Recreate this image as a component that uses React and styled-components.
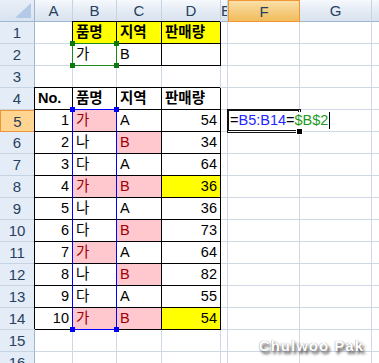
import React from 'react'
import styled, { createGlobalStyle, css } from 'styled-components'

const GlobalStyle = createGlobalStyle`
  html, body {
    margin: 0;
    padding: 0;
    background: #fff;
    overflow: hidden;
  }
`

const COLUMNS = ['A', 'B', 'C', 'D', 'E', 'F', 'G', 'H']
const WIDTHS = [35, 38, 44, 45, 59, 7, 72, 72, 40]
const YELLOW = '#ffff00'
const PINK = '#ffc7ce'
const DARK_RED = '#9c0006'

const records = [
  [1, '가', 'A', 54],
  [2, '나', 'B', 34],
  [3, '다', 'A', 64],
  [4, '가', 'B', 36],
  [5, '나', 'A', 36],
  [6, '다', 'B', 73],
  [7, '가', 'A', 64],
  [8, '나', 'B', 82],
  [9, '다', 'A', 55],
  [10, '가', 'B', 54],
]

// what each cell of a row holds, by column letter
const rowCells = (row) => {
  if (row === 1) {
    return {
      B: { text: '품명', bold: true, fill: YELLOW, boxed: true },
      C: { text: '지역', bold: true, fill: YELLOW, boxed: true },
      D: { text: '판매량', bold: true, fill: YELLOW, boxed: true },
    }
  }
  if (row === 2) {
    return {
      B: { text: '가', boxed: true },
      C: { text: 'B', boxed: true },
      D: { boxed: true },
    }
  }
  if (row === 4) {
    return {
      A: { text: 'No.', bold: true, boxed: true },
      B: { text: '품명', bold: true, boxed: true },
      C: { text: '지역', bold: true, boxed: true },
      D: { text: '판매량', bold: true, boxed: true },
    }
  }
  if (row >= 5 && row <= 14) {
    const [no, name, area, qty] = records[row - 5]
    const hitName = name === '가'
    const hitArea = area === 'B'
    const cells = {
      A: { text: no, right: true, boxed: true },
      B: { text: name, boxed: true, fill: hitName ? PINK : null, color: hitName ? DARK_RED : null },
      C: { text: area, boxed: true, fill: hitArea ? PINK : null, color: hitArea ? DARK_RED : null },
      D: { text: qty, right: true, boxed: true, fill: hitName && hitArea ? YELLOW : null },
    }
    if (row === 5) cells.F = { editing: true }
    return cells
  }
  return {}
}

const Frame = styled.div`
  width: 379px;
  height: 363px;
  overflow: hidden;
  position: relative;
  font-family: 'Liberation Sans', 'Noto Sans CJK KR', sans-serif;
`

const Sheet = styled.div`
  display: grid;
  grid-template-columns: ${WIDTHS.map((w) => `${w}px`).join(' ')};
  grid-template-rows: repeat(17, 22px);
`

const placed = css`
  grid-row: ${(p) => p.$r};
  grid-column: ${(p) => p.$c};
`

const Corner = styled.div`
  grid-row: 1;
  grid-column: 1;
  box-sizing: border-box;
  position: relative;
  background: linear-gradient(#e9eff8, #d9e3f1);
  border-right: 1px solid #9eb6ce;
  border-bottom: 1px solid #9eb6ce;

  &::after {
    content: '';
    position: absolute;
    right: 3px;
    bottom: 3px;
    width: 16px;
    height: 15px;
    background: #b3c9e8;
    clip-path: polygon(100% 0, 100% 100%, 0 100%);
  }
`

const ColHead = styled.div`
  ${placed}
  box-sizing: border-box;
  display: flex;
  align-items: center;
  justify-content: ${(p) => (p.$narrow ? 'flex-start' : 'center')};
  overflow: hidden;
  font-size: 15px;
  color: #27415f;
  background: linear-gradient(#f6f9fd, #e3eaf4 55%, #dae3ef);
  border-right: 1px solid #c5d3e3;
  border-bottom: 1px solid #9eb6ce;
  ${(p) =>
    p.$active &&
    css`
      background: linear-gradient(#fae0a8, #f5cb7c 55%, #f1bd5c);
      border: 1px solid #f29536;
    `}
`

const RowHead = styled.div`
  ${placed}
  box-sizing: border-box;
  display: flex;
  align-items: center;
  justify-content: center;
  font-size: 15px;
  color: #27415f;
  background: #e4ecf7;
  border-right: 1px solid #9eb6ce;
  border-bottom: 1px solid #c5d3e3;
  ${(p) =>
    p.$active &&
    css`
      background: #ffd591;
      border: 1px solid #f29536;
    `}
`

const Cell = styled.div`
  ${placed}
  box-sizing: border-box;
  display: flex;
  align-items: flex-end;
  justify-content: ${(p) => (p.$right ? 'flex-end' : 'flex-start')};
  padding: 0 3px 2px 3px;
  font-size: 14.5px;
  font-weight: ${(p) => (p.$bold ? 700 : 400)};
  line-height: 17px;
  white-space: nowrap;
  color: ${(p) => p.$color || '#000'};
  background: ${(p) => p.$fill || '#fff'};
  border-right: 1px solid #d0d7e5;
  border-bottom: 1px solid #d0d7e5;
  ${(p) =>
    p.$boxed &&
    css`
      border-color: #000;
      box-shadow: -1px -1px 0 #000;
    `}
  ${(p) =>
    p.$editing &&
    css`
      position: relative;
      z-index: 4;
      border-color: #fff;
      box-shadow: 0 0 0 1px #111, inset 0 0 0 1px #111;
    `}
`

const Range = styled.div`
  ${placed}
  position: relative;
  z-index: 2;
  margin: -1px 0 0 -1px;
  border: 1px solid ${(p) => p.$color};
  pointer-events: none;
`

const Handle = styled.span`
  position: absolute;
  width: 5px;
  height: 5px;
  background: ${(p) => p.$color};
  ${(p) => (p.$top ? 'top: -3px;' : 'bottom: -3px;')}
  ${(p) => (p.$left ? 'left: -3px;' : 'right: -3px;')}
`

const FormulaText = styled.div`
  position: absolute;
  left: 2px;
  top: 2px;
  display: flex;
  align-items: center;
  padding-right: 1px;
  white-space: nowrap;
  font-size: 14.5px;
  line-height: 17px;
  color: #000;
  background: #fff;
`

const Ref = styled.span`
  color: ${(p) => p.$color};
`

const Caret = styled.span`
  width: 1px;
  height: 17px;
  margin-left: 1px;
  background: #000;
`

const FillHandle = styled.span`
  position: absolute;
  right: -4px;
  bottom: -4px;
  width: 5px;
  height: 5px;
  background: #000;
  border: 1px solid #fff;
`

const Watermark = styled.div`
  position: absolute;
  right: 15px;
  bottom: 9px;
  font-size: 15px;
  font-weight: 700;
  letter-spacing: 1px;
  color: #fff;
  text-shadow: 2px 3px 3px #555, 0 0 1px #777;
`

const Corners = ({ color }) => (
  <>
    <Handle $color={color} $top $left />
    <Handle $color={color} $top />
    <Handle $color={color} $left />
    <Handle $color={color} />
  </>
)

const Formula = () => (
  <>
    <FormulaText>
      =<Ref $color="#2323ff">B5:B14</Ref>=<Ref $color="#1d9a1d">$B$2</Ref>
      <Caret />
    </FormulaText>
    <FillHandle />
  </>
)

export default function App() {
  const rows = Array.from({ length: 16 }, (_, i) => i + 1)

  return (
    <Frame>
      <GlobalStyle />
      <Sheet>
        <Corner />
        {COLUMNS.map((c, i) => (
          <ColHead key={c} $r={1} $c={i + 2} $active={c === 'F'} $narrow={c === 'E'}>
            {c}
          </ColHead>
        ))}
        {rows.map((r) => {
          const cells = rowCells(r)
          return (
            <React.Fragment key={r}>
              <RowHead $r={r + 1} $c={1} $active={r === 5}>
                {r}
              </RowHead>
              {COLUMNS.map((c, i) => {
                const cell = cells[c] || {}
                return (
                  <Cell
                    key={c}
                    $r={r + 1}
                    $c={i + 2}
                    $bold={cell.bold}
                    $right={cell.right}
                    $fill={cell.fill}
                    $color={cell.color}
                    $boxed={cell.boxed}
                    $editing={cell.editing}
                  >
                    {cell.editing ? <Formula /> : cell.text}
                  </Cell>
                )
              })}
            </React.Fragment>
          )
        })}

        <Range $c={3} $r="3" $color="#1a8a1a">
          <Corners color="#0a7a0a" />
        </Range>
        <Range $c={3} $r="6 / 16" $color="#0000ff">
          <Corners color="#0000ff" />
        </Range>
      </Sheet>
      <Watermark>Chulwoo Pak</Watermark>
    </Frame>
  )
}
